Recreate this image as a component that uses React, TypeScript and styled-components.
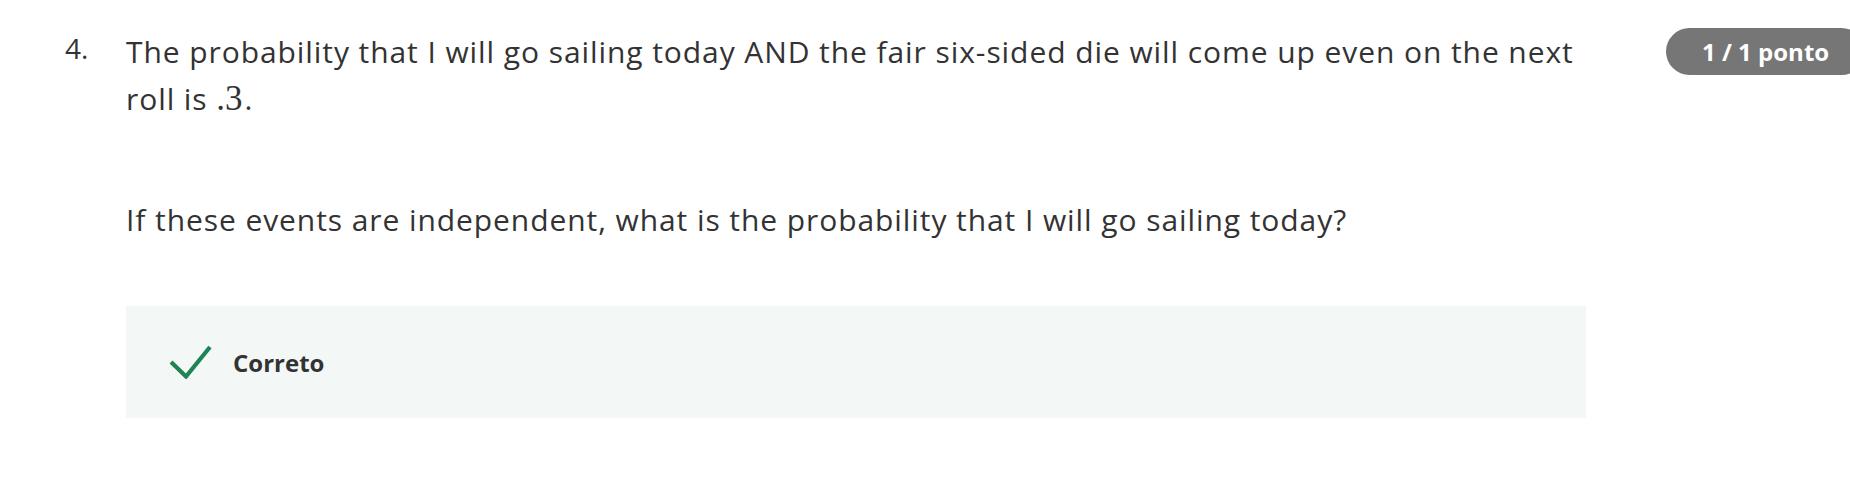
import React from "react";
import styled, { createGlobalStyle } from "styled-components";

const GlobalStyle = createGlobalStyle`
  html, body {
    margin: 0;
    padding: 0;
    background: #ffffff;
    overflow: hidden;
  }
  body {
    font-family: "Open Sans", "Liberation Sans", sans-serif;
    color: #333333;
  }
`;

const Page = styled.div`
  width: 1850px;
  height: 486px;
  box-sizing: border-box;
  padding: 28px 0 0 65px;
  display: flex;
  align-items: flex-start;
`;

const Number = styled.div`
  width: 61px;
  flex: none;
  font-size: 28px;
  line-height: 40px;
  color: #333333;
`;

const Content = styled.div`
  width: 1460px;
  flex: none;
  display: flex;
  flex-direction: column;
`;

const Paragraph = styled.p<{ $gap?: number }>`
  margin: 0 0 ${(p) => p.$gap ?? 0}px 0;
  font-size: 30px;
  letter-spacing: 0.92px;
  line-height: 47px;
  color: #333333;
`;

const MathText = styled.span`
  font-family: "Liberation Serif", "DejaVu Serif", serif;
  font-size: 35px;
  line-height: 30px;
  letter-spacing: 0;
  padding-right: 2px;
`;

const Feedback = styled.div`
  height: 112px;
  background: #f3f8f7;
  display: flex;
  align-items: center;
  padding-left: 43px;
  gap: 21px;
`;

const FeedbackLabel = styled.span`
  font-size: 24px;
  font-weight: 700;
  color: #333333;
`;

const Badge = styled.div`
  margin-left: 80px;
  flex: none;
  height: 47px;
  box-sizing: border-box;
  padding: 0 36px;
  border-radius: 24px;
  background: #767676;
  color: #ffffff;
  font-size: 24px;
  font-weight: 700;
  display: flex;
  align-items: center;
  white-space: nowrap;
`;

const CheckIcon = () => (
  <svg width="43" height="34" viewBox="0 0 43 34" fill="none">
    <path
      d="M2 17 L17 31.5 L41 2"
      stroke="#1f8354"
      strokeWidth="4.2"
      strokeLinecap="butt"
      strokeLinejoin="miter"
    />
  </svg>
);

export default function App() {
  return (
    <>
      <GlobalStyle />
      <Page>
        <Number>4.</Number>
        <Content>
          <Paragraph $gap={74}>
            {"The probability that I will go sailing today AND the fair six-sided die will come up even on the next "}
            <span>
              roll is <MathText>.3</MathText>.
            </span>
          </Paragraph>
          <Paragraph $gap={63}>
            If these events are independent, what is the probability that I will go sailing today?
          </Paragraph>
          <Feedback>
            <CheckIcon />
            <FeedbackLabel>Correto</FeedbackLabel>
          </Feedback>
        </Content>
        <Badge>1 / 1 ponto</Badge>
      </Page>
    </>
  );
}
